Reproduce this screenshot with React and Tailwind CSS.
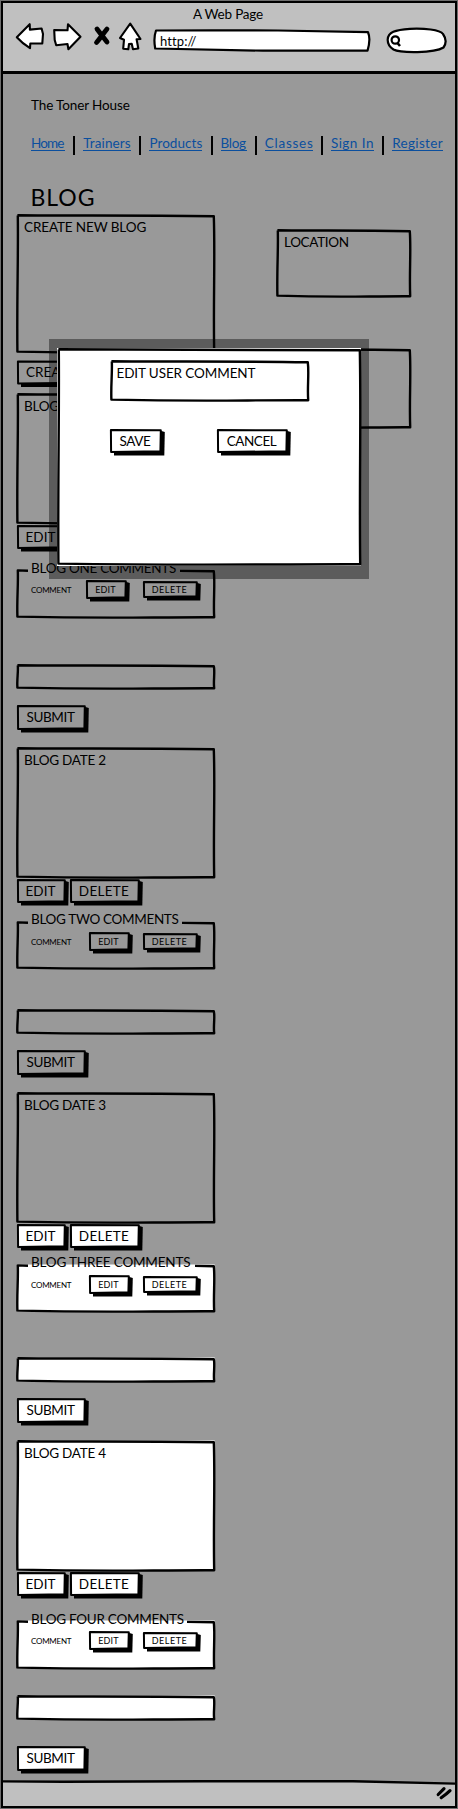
import React from "react";
import { clsx } from "clsx";

/* Hand-drawn rectangle outline; gap leaves an opening in the top edge for a legend. */
function Frame({ w, h, fill = "none", gap, stroke = 2.4 }) {
  const top = gap
    ? `M${gap[1]} 1.9 L${w - 1.2} 2.3`
    : `M1.4 1.3 C${w * 0.3} 1.9 ${w * 0.6} 1 ${w - 1.2} 2.3`;
  const rest = `C${w + 0.2} ${h * 0.3} ${w - 1.8} ${h * 0.65} ${w - 0.8} ${h - 1.8} C${w * 0.65} ${h - 2} ${w * 0.5} ${h - 0.2} 1.4 ${h - 2.4} C0.8 ${h * 0.6} 2.4 ${h * 0.3} 1.8 1.4`;
  return (
    <svg className="absolute inset-0 size-full overflow-visible" viewBox={`0 0 ${w} ${h}`} aria-hidden="true">
      {fill !== "none" && <rect x="1" y="0.5" width={w - 1.2} height={h - 1.5} fill={fill} />}
      <path
        d={`${top} ${rest} ${gap ? `L${gap[0]} 1.7` : ""}`}
        fill="none"
        stroke="#000"
        strokeWidth={stroke}
        strokeLinejoin="round"
      />
    </svg>
  );
}

function Box({ w, h, fill, className, labelClass = "pl-2", children }) {
  return (
    <div className={clsx("relative", className)}>
      <Frame w={w} h={h} fill={fill} />
      {children && <div className={clsx("relative pt-[5px] leading-4 whitespace-nowrap", labelClass)}>{children}</div>}
    </div>
  );
}

function Button({ w, h, fill = "#999999", className, children }) {
  return (
    <button type="button" className={clsx("relative flex shrink-0 items-center justify-center", className)}>
      <svg className="absolute inset-0 size-full overflow-visible" viewBox={`0 0 ${w} ${h}`} aria-hidden="true">
        <path d={`M4 4 L${w - 0.5} 2 L${w + 2.8} 3 L${w + 2.3} ${h + 2.4} L4 ${h + 2.4} Z`} fill="#000" />
        <path
          d={`M0.9 1 L${w - 1.2} 1.3 L${w - 1.6} ${h - 1.8} L1.1 ${h - 0.9} Z`}
          fill={fill}
          stroke="#000"
          strokeWidth="2"
          strokeLinejoin="round"
        />
      </svg>
      <span className="relative -translate-x-px whitespace-nowrap">{children}</span>
    </button>
  );
}

function EditDelete({ fill }) {
  return (
    <div className="mb-px ml-px flex gap-1">
      <Button w={49} h={24} fill={fill} className="h-6 w-[49px] tracking-[0.06px]">EDIT</Button>
      <Button w={70} h={24} fill={fill} className="h-6 w-[70px] tracking-[0.29px]">DELETE</Button>
    </div>
  );
}

function Comments({ legend, legendClass, gapEnd, fill, h = 49, className, editClass = "ml-[17px] mr-[13px]" }) {
  return (
    <div className={clsx("relative w-[199px]", className)}>
      <Frame w={199} h={h} fill={fill} gap={[12, gapEnd]} />
      <div className={clsx("relative ml-[15px] h-4 leading-4 whitespace-nowrap", legendClass)}>{legend}</div>
      <div className="relative -mt-[5px] flex h-[19px] items-center pl-[15px]">
        <span className="w-[41px] shrink-0 text-[8px] tracking-[-0.24px]">COMMENT</span>
        <Button w={41} h={19} fill={fill} className={clsx("h-[19px] w-[41px] text-[9px] tracking-[0.21px]", editClass)}>EDIT</Button>
        <Button w={55} h={17} fill={fill} className="h-[17px] w-[55px] text-[9px] tracking-[0.53px]">DELETE</Button>
      </div>
    </div>
  );
}

function Reply({ fill, className, submitClass = "mt-[15px]" }) {
  return (
    <div className={className}>
      <Box w={199} h={26} fill={fill} className="h-[26px] w-[199px]" />
      <Button w={69} h={25} fill={fill} className={clsx("ml-px h-[25px] w-[69px] tracking-[-0.35px]", submitClass)}>SUBMIT</Button>
    </div>
  );
}

const links = [
  ["Home", "w-[34px] tracking-[-0.83px]"],
  ["Trainers", "w-[48px] tracking-[0.13px]"],
  ["Products", "w-[53px] tracking-[0.07px]"],
  ["Blog", "w-[26px] tracking-[-0.31px]"],
  ["Classes", "w-[48px] tracking-[0.74px]"],
  ["Sign In", "w-[43px] tracking-[0.46px]"],
  ["Register", "w-[51px] tracking-[0.34px]"],
];

function Browser() {
  return (
    <header className="h-[71px] shrink-0 border-b-[3px] border-black bg-[#c0c0c0]">
      <div className="h-[18px] pt-0.5 pr-0.5 text-center leading-[18px] tracking-[-0.2px]">A Web Page</div>
      <div className="flex h-[34px] items-center pl-3">
        <svg width="130" height="32" viewBox="0 0 130 32" className="shrink-0" fill="#fff" stroke="#000" strokeWidth="2.1" strokeLinejoin="round">
          <path d="M1.8 15.2 L14.7 2.2 L14.9 7.6 L26.6 6.5 L28 12 L27.3 21.4 L15.3 21.5 L15 26.2 Q7 21 1.8 15.2 Z" />
          <path d="M39.2 8 L52.5 8.3 L53 2.3 L65.5 14.8 L53.4 27.2 L52.5 22 L41.2 23.2 L39.7 18 Z" />
          <path d="M82 7 C85 11 88.5 15.5 92 20 M92 7 C88 12 85 16.5 81.5 20.5" fill="none" strokeWidth="4.8" strokeLinecap="round" />
          <path d="M105 16 L115.2 1.7 L125.5 17 L121.6 17.2 L123.3 26.5 L118 27.2 L116.7 21.8 L114 22 L113.3 27.3 L108.2 26.7 L109 17.8 Z" />
        </svg>
        <div className="relative mt-[5px] ml-2 flex h-[23px] w-[218px] shrink-0 items-center">
          <svg className="absolute inset-0 size-full overflow-visible" viewBox="0 0 218 23" fill="#fff" stroke="#000" strokeWidth="2.2" strokeLinejoin="round">
            <path d="M3 1.5 L60 1.3 L125 1.5 L215 3.2 Q218 10 214.5 21.7 L110 21.7 L2.2 19.5 Q0.3 9 3 1.5 Z" />
          </svg>
          <span className="relative pl-[7px] text-[13px] leading-5 tracking-[0.1px]">http://</span>
        </div>
        <svg className="mt-[5px] ml-[15px] shrink-0" width="61" height="27" viewBox="0 0 61 27" fill="#fff" stroke="#000" strokeWidth="2.2">
          <path d="M1.7 12.5 C2 5 9 2.8 24 1.8 C38 1.2 54 2.5 57 7 C60.5 12 60 17 57.5 20.5 C48 26.5 14 26 7.5 22.5 C3.5 20 1.5 17 1.7 12.5 Z" />
          <circle cx="9.3" cy="13" r="3.7" />
          <path d="M11 15.5 L14 19" strokeWidth="2.6" />
        </svg>
      </div>
    </header>
  );
}

function Modal() {
  return (
    <div className="absolute top-[339px] left-[49px] h-[240px] w-[320px] bg-black/40 pt-[9px] pl-2">
      <div className="relative h-[218px] w-[304px] bg-white pt-3 pl-[53px]">
        <Frame w={304} h={218} />
        <Box w={199} h={42} className="h-[42px] w-[199px] tracking-[-0.1px]" labelClass="pl-[6.5px]">EDIT USER COMMENT</Box>
        <div className="mt-[27px] flex gap-[55px]">
          <Button w={52} h={24} fill="#ffffff" className="h-6 w-[52px] tracking-[-0.33px]">SAVE</Button>
          <Button w={71} h={24} fill="#ffffff" className="h-6 w-[71px] tracking-[-0.44px]">CANCEL</Button>
        </div>
      </div>
    </div>
  );
}

const dateBox = "h-[132px] w-[199px] tracking-[-0.26px]";

export default function App() {
  return (
    <div className="relative h-[1809px] w-[458px] bg-[#6e6e6e] p-px font-['Lato','Liberation_Sans',sans-serif] text-[13.5px] text-black">
      <div className="flex size-full flex-col border-2 border-black bg-[#999999]">
        <Browser />
        <main className="flex-1 pl-[13px]">
          <div className="mt-[21px] ml-[15px] h-5 leading-5 tracking-[-0.12px]">The Toner House</div>
          <nav className="mt-[21px] ml-[15px] flex h-[19px] items-start">
            {links.map(([name, cls], i) => (
              <React.Fragment key={name}>
                {i > 0 && <span className="mr-2 ml-[8.2px] h-[19px] w-0.5 shrink-0 bg-black" />}
                <a className={clsx("h-[15px] shrink-0 border-b border-[#0b4f9e] leading-[14px] whitespace-nowrap text-[#0b4f9e]", cls)}>{name}</a>
              </React.Fragment>
            ))}
          </nav>
          <h1 className="mt-7 ml-[14.5px] h-7 text-[23px] leading-7 tracking-[0.96px]">BLOG</h1>
          <div className="mt-[3px] flex">
            <div className="flex w-[199px] flex-col">
              <Box w={199} h={140} className="h-[140px] w-[199px] tracking-[-0.12px]">CREATE NEW BLOG</Box>
              <Button w={69} h={24} className="mt-1.5 ml-px h-[25px] w-[69px] tracking-[-0.05px]">CREATE</Button>
              <Box w={199} h={132} className={clsx("mt-2", dateBox)}>BLOG DATE 1</Box>
              <EditDelete />
              <Comments legend="BLOG ONE COMMENTS" legendClass="-top-[9px] tracking-[-0.28px]" gapEnd={164} h={50} className="mt-[19px] h-[50px]" editClass="ml-[14px] mr-[16px]" />
              <Reply className="mt-[45px]" />

              <Box w={199} h={132} className={clsx("mt-[17px]", dateBox)}>BLOG DATE 2</Box>
              <EditDelete />
              <Comments legend="BLOG TWO COMMENTS" legendClass="-top-2.5 tracking-[-0.33px]" gapEnd={166} className="mt-[17px] h-[49px]" />
              <Reply className="mt-[39px]" />

              <Box w={199} h={132} className={clsx("mt-[17px]", dateBox)}>BLOG DATE 3</Box>
              <EditDelete fill="#ffffff" />
              <Comments legend="BLOG THREE COMMENTS" legendClass="-top-2.5 tracking-[-0.18px]" gapEnd={179} fill="#ffffff" className="mt-[15px] h-[49px]" />
              <Reply fill="#ffffff" className="mt-[44px]" />

              <Box w={199} h={132} fill="#ffffff" className={clsx("mt-[17px]", dateBox)}>BLOG DATE 4</Box>
              <EditDelete fill="#ffffff" />
              <Comments legend="BLOG FOUR COMMENTS" legendClass="-top-[9px] tracking-[-0.27px]" gapEnd={171} fill="#ffffff" h={50} className="mt-[23px] h-[50px]" />
              <Reply fill="#ffffff" className="mt-[25px]" submitClass="mt-[25px]" />
            </div>
            <aside className="ml-[61px] flex w-[135px] flex-col gap-[50px] pt-[15px]">
              <Box w={135} h={69} className="h-[69px] tracking-[-0.34px]">LOCATION</Box>
              <Box w={135} h={81} className="h-[81px]" />
            </aside>
          </div>
        </main>
        <footer className="relative flex h-[25px] shrink-0 items-center justify-end bg-[#c0c0c0] pr-0.5">
          <svg className="absolute inset-x-0 -top-px h-[5px] w-full" viewBox="0 0 452 5" preserveAspectRatio="none" aria-hidden="true">
            <path d="M0 0 H452 V3.5 L330 1.2 H0 Z" fill="#999999" />
            <path d="M0 1.4 L60 1.8 L200 1.2 L350 1.2 L452 3.6" fill="none" stroke="#000" strokeWidth="2.4" />
          </svg>
          <svg width="18" height="15" viewBox="0 0 18 15" fill="none" stroke="#000" strokeWidth="3.2" strokeLinecap="round">
            <path d="M3.2 8.5 L9 2.6 M6.2 11.7 C9 9.8 12 7.6 15 4.6" />
          </svg>
        </footer>
      </div>
      <Modal />
    </div>
  );
}
